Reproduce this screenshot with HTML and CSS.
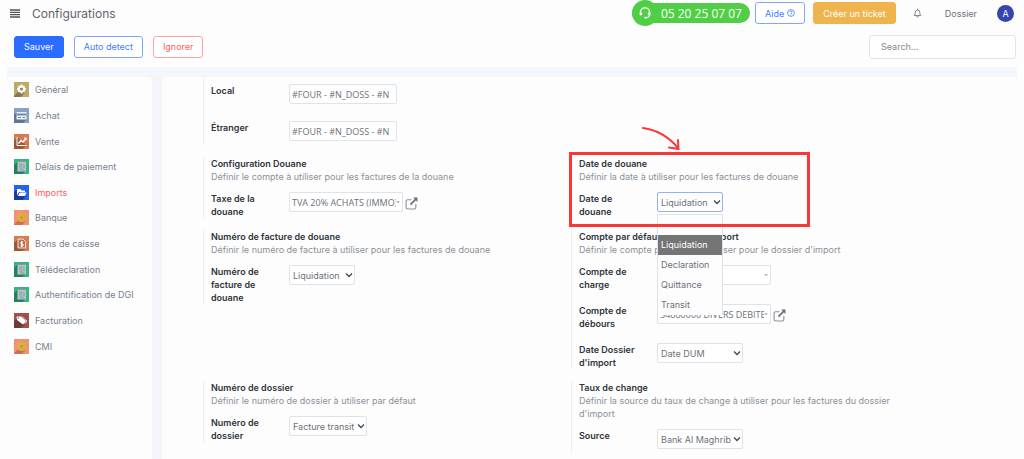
FILE: index.html
```html
<!DOCTYPE html>
<html lang="fr">

<head>
  <meta charset="utf-8">
  <title>Configurations</title>
  <meta name="viewport" content="width=device-width, initial-scale=1">
  <link rel="stylesheet" href="styles.css">
</head>

<body>

<!-- shared icons -->
<svg class="sprite" aria-hidden="true">
  <symbol id="chevron" viewBox="0 0 8 8"><path d="M1 2.5l3 3 3-3" fill="none" stroke="#444b52" stroke-width="1.4"/></symbol>
  <symbol id="caret" viewBox="0 0 8 8"><path d="M2 3.2h4L4 5.2z" fill="#a9adb2"/></symbol>
  <symbol id="external" viewBox="0 0 24 24">
    <path d="M12 5H5a3 3 0 0 0-3 3v11a3 3 0 0 0 3 3h12a3 3 0 0 0 3-3v-6" fill="none" stroke="#8b9097" stroke-width="2"/>
    <path d="M10 14L20 4" stroke="#6a6f76" stroke-width="3"/>
    <path d="M15 1h8v8z" fill="#6a6f76"/>
  </symbol>
  <symbol id="coin" viewBox="0 0 30 30">
    <rect width="30" height="30" fill="#f09274"/>
    <path d="M8 21L0 29v1h16l7-8z" fill="#c57258"/>
    <circle cx="15" cy="15" r="9" fill="#f2a73b"/>
    <path d="M15 6a9 9 0 0 1 0 18z" fill="#dcae35"/>
    <path d="M15 11l1.500 2.500 3 1.500-3 1.500-1.500 3-1.500-3-2.500-1.500 2.500-1.500z" fill="#6cc24a"/>
  </symbol>
  <symbol id="sheet" viewBox="0 0 30 30">
    <rect width="30" height="30" fill="#35b67f"/>
    <path d="M7 5L0 12v18h17l7-6z" fill="#26805c"/>
    <path d="M7 4h17v21H7z" fill="#b9c6ce"/>
    <path d="M7 4h17v2H7zM10 9h7v2h-7zM10 13h7v2h-7zM10 17h7v2h-7zM19 9h2v10h-2zM12 21h9v2h-9z" fill="#8797a0"/>
  </symbol>
</svg>

<header class="navbar">
  <button class="menu-toggle" type="button" aria-label="Menu">
    <svg viewBox="0 0 10 9"><path d="M0 1h10M0 3.3h10M0 5.7h10M0 8h10" stroke="#4c535a" stroke-width="1.3"/></svg>
  </button>
  <h1 class="page-title">Configurations</h1>

  <a class="phone" href="tel:0520250707">
    <span class="phone-icon">
      <svg viewBox="0 0 24 24" fill="none" stroke="#fff" stroke-width="2.2">
        <path d="M4 13v-2a8 8 0 0 1 16 0v3a6 6 0 0 1-6 6"/>
        <path d="M5 11v5M19 11v5" stroke-width="4"/>
        <path d="M11 20h3" stroke-width="3"/>
      </svg>
    </span>
    <span>05 20 25 07 07</span>
  </a>
  <a class="btn btn-outline help" href="#">Aide
    <svg viewBox="0 0 16 16" fill="none" stroke="#3f7bff" stroke-width="1.6">
      <circle cx="8" cy="8" r="6.8"/>
      <path d="M5.8 6.4a2.2 2.2 0 1 1 3.1 2c-.7.3-.9.6-.9 1.3M8 10.8v1.6"/>
    </svg>
  </a>
  <a class="btn btn-ticket" href="#">Créer un ticket</a>
  <button class="bell" type="button" aria-label="Notifications">
    <svg viewBox="0 0 16 18" fill="none" stroke="#6b7178" stroke-width="1.5">
      <path d="M8 1v2M2 13.5c1.6-1.4 1.8-3 1.8-5.500a4.200 4.200 0 0 1 8.400 0c0 2.500.2 4.100 1.800 5.500zM6.300 14.500c.3 2.200 3.100 2.200 3.400 0"/>
    </svg>
  </button>
  <a class="company" href="#">Dossier</a>
  <a class="avatar" href="#">A</a>
</header>

<div class="toolbar">
  <button class="btn btn-primary" type="button">Sauver</button>
  <button class="btn btn-outline" type="button">Auto detect</button>
  <button class="btn btn-danger" type="button">Ignorer</button>
  <input class="search" type="search" placeholder="Search..." aria-label="Search">
</div>

<main class="main">
  <nav class="sidebar">
    <a href="#">
      <svg viewBox="0 0 30 30">
        <rect width="30" height="30" fill="#bdaa68"/>
        <path d="M9 19L0 28v2h14l8-10z" fill="#85784c"/>
        <circle cx="15" cy="14" r="7" fill="#fff"/>
        <path d="M15 5v18M6 14h18M9 8l12 12M21 8L9 20" stroke="#fff" stroke-width="3.500"/>
        <circle cx="15" cy="14" r="3" fill="#8e8254"/>
      </svg>
      Général</a>
    <a href="#">
      <svg viewBox="0 0 30 30">
        <rect width="30" height="30" fill="#87a3bf"/>
        <path d="M6 8L0 14v16h18l7-7z" fill="#5c7894"/>
        <rect x="5" y="8" width="20" height="15" fill="#e8eff5"/>
        <path d="M5 11h20v4H5zM8 18h6v2H8zM17 18h5v2h-5z" fill="#6e8ca8"/>
      </svg>
      Achat</a>
    <a href="#">
      <svg viewBox="0 0 30 30">
        <rect width="30" height="30" fill="#d47b50"/>
        <path d="M6 7L0 13v17h17l8-7z" fill="#9c5738"/>
        <path d="M6 6v17h19" fill="none" stroke="#fff" stroke-width="2"/>
        <path d="M9 19l5-6 4 3 6-7" fill="none" stroke="#fff" stroke-width="3"/>
        <path d="M19 7h6v6z" fill="#fff"/>
      </svg>
      Vente</a>
    <a href="#"><svg><use href="#sheet"/></svg>Délais de paiement</a>
    <a class="active" href="#">
      <svg viewBox="0 0 30 30">
        <rect width="30" height="30" fill="#2463ee"/>
        <path d="M6 9L0 15v15h17l7-8z" fill="#163d99"/>
        <path d="M6 8h7l2 3h7v3H10l-4 7z" fill="#fff"/>
        <path d="M11 15h14l-3 7H8z" fill="#fff"/>
      </svg>
      Imports</a>
    <a href="#"><svg><use href="#coin"/></svg>Banque</a>
    <a href="#">
      <svg viewBox="0 0 30 30">
        <rect width="30" height="30" fill="#d67c50"/>
        <path d="M7 7L0 14v16h16l8-6z" fill="#9a5639"/>
        <path d="M8 6h10l5 5v13H8z" fill="#b5714f" stroke="#f5e6dd" stroke-width="2"/>
        <path d="M18 12h-4v4h4v4h-5M15.500 10v12" fill="none" stroke="#fff" stroke-width="2"/>
      </svg>
      Bons de caisse</a>
    <a href="#"><svg><use href="#sheet"/></svg>Télédeclaration</a>
    <a href="#"><svg><use href="#sheet"/></svg>Authentification de DGI</a>
    <a href="#">
      <svg viewBox="0 0 30 30">
        <rect width="30" height="30" fill="#9d504e"/>
        <path d="M5 12L0 17v13h14l9-8z" fill="#6f3837"/>
        <path d="M5 7h8l11 9-6 7L6 14z" fill="#fff"/>
        <path d="M15 7l11 9-5 6" fill="none" stroke="#fff" stroke-width="1.500"/>
        <circle cx="8.500" cy="10" r="1.500" fill="#9d504e"/>
      </svg>
      Facturation</a>
    <a href="#"><svg><use href="#coin"/></svg>CMI</a>
  </nav>

  <form class="panel">
    <section class="setting">
      <div class="field">
        <label for="local">Local</label>
        <input class="w-text" id="local" type="text" value="#FOUR - #N_DOSS - #N">
      </div>
      <div class="field">
        <label for="etranger">Étranger</label>
        <input class="w-text" id="etranger" type="text" value="#FOUR - #N_DOSS - #N">
      </div>
    </section>

    <section class="setting new-row">
      <h2>Configuration Douane</h2>
      <p>Définir le compte à utiliser pour les factures de la douane</p>
      <div class="field">
        <label for="taxe">Taxe de la douane</label>
        <span class="control w-record">
          <input id="taxe" type="text" value="TVA 20% ACHATS (IMMO)">
          <svg><use href="#caret"/></svg>
        </span>
        <a class="open-record" href="#" aria-label="Ouvrir"><svg><use href="#external"/></svg></a>
      </div>
    </section>

    <section class="setting highlighted">
      <h2>Date de douane</h2>
      <p>Définir la date à utiliser pour les factures de douane</p>
      <div class="field">
        <label for="date-douane">Date de douane</label>
        <span class="control w-small open">
          <select id="date-douane"><option>Liquidation</option><option>Declaration</option><option>Quittance</option><option>Transit</option></select>
          <svg><use href="#chevron"/></svg>
          <ul class="options">
            <li></li>
            <li class="selected">Liquidation</li>
            <li>Declaration</li>
            <li>Quittance</li>
            <li>Transit</li>
          </ul>
        </span>
      </div>
      <svg class="arrow" viewBox="0 0 38 24" fill="none" stroke="#fb3636" stroke-width="2" stroke-linecap="round">
        <path d="M1 1C15 3 27 10 36 21M36 13l.5 9-9.500-1.500"/>
      </svg>
    </section>

    <section class="setting">
      <h2>Numéro de facture de douane</h2>
      <p>Définir le numéro de facture à utiliser pour les factures de douane</p>
      <div class="field">
        <label for="num-facture">Numéro de facture de douane</label>
        <span class="control w-small">
          <select id="num-facture"><option>Liquidation</option></select>
          <svg><use href="#chevron"/></svg>
        </span>
      </div>
    </section>

    <section class="setting">
      <h2>Compte par défaut de dossier import</h2>
      <p>Définir le compte par défaut à utiliser pour le dossier d'import</p>
      <div class="field">
        <label for="charge">Compte de charge</label>
        <span class="control w-record">
          <input id="charge" type="text">
          <svg><use href="#caret"/></svg>
        </span>
      </div>
      <div class="field">
        <label for="debours">Compte de débours</label>
        <span class="control w-record">
          <input id="debours" type="text" value="34880000 DIVERS DEBITEURS">
          <svg><use href="#caret"/></svg>
        </span>
        <a class="open-record" href="#" aria-label="Ouvrir"><svg><use href="#external"/></svg></a>
      </div>
      <div class="field">
        <label for="date-dossier">Date Dossier d'import</label>
        <span class="control w-large">
          <select id="date-dossier"><option>Date DUM</option></select>
          <svg><use href="#chevron"/></svg>
        </span>
      </div>
    </section>

    <section class="setting">
      <h2>Numéro de dossier</h2>
      <p>Définir le numéro de dossier à utiliser par défaut</p>
      <div class="field">
        <label for="num-dossier">Numéro de dossier</label>
        <span class="control w-medium">
          <select id="num-dossier"><option>Facture transit</option></select>
          <svg><use href="#chevron"/></svg>
        </span>
      </div>
    </section>

    <section class="setting">
      <h2>Taux de change</h2>
      <p>Définir la source du taux de change à utiliser pour les factures du dossier d'import</p>
      <div class="field">
        <label for="source">Source</label>
        <span class="control w-large">
          <select id="source"><option>Bank Al Maghrib</option></select>
          <svg><use href="#chevron"/></svg>
        </span>
      </div>
    </section>
  </form>
</main>

</body>

</html>
```
FILE: styles.css
```css
*, *::before, *::after {
  box-sizing: border-box;
}

body {
  display: flex;
  flex-direction: column;
  height: 100vh;
  margin: 0;
  overflow: hidden;
  background: #fdfdfe;
  color: #6b7178;
  font-family: Inter, "Open Sans", sans-serif;
  font-size: 9px;
  line-height: 13px;
}

a {
  color: inherit;
  text-decoration: none;
}

button, input, select {
  font: inherit;
  color: inherit;
}

.sprite {
  position: absolute;
  width: 0;
  height: 0;
}

/* top bar */

.navbar {
  display: flex;
  align-items: center;
  height: 26px;
  padding: 0 10px;
}

.menu-toggle, .bell {
  display: flex;
  padding: 0;
  border: 0;
  background: none;
}

.menu-toggle svg {
  width: 10px;
  height: 9px;
}

.page-title {
  margin: 0 auto 0 12px;
  font-size: 12px;
  font-weight: 400;
  color: #5d646c;
}

.phone {
  display: flex;
  align-items: center;
  height: 20px;
  margin-right: 5px;
  padding-right: 8px;
  border-radius: 10px;
  background: #50cf46;
  color: #fff;
  font-family: "Open Sans", sans-serif;
  font-size: 12px;
}

.phone-icon {
  display: flex;
  align-items: center;
  justify-content: center;
  width: 26px;
  height: 26px;
  margin-right: 3px;
  border-radius: 50%;
  background: #50cf46;
}

.phone-icon svg {
  width: 14px;
  height: 14px;
}

.btn {
  display: flex;
  align-items: center;
  justify-content: center;
  height: 22px;
  padding: 0 9px;
  border: 1px solid;
  border-radius: 3px;
  background: #fff;
}

.btn-primary {
  border-color: #2a6cff;
  background: #2a6cff;
  color: #fff;
}

.btn-outline {
  border-color: #7ea6ff;
  color: #3f7bff;
}

.btn-danger {
  border-color: #ffa19c;
  color: #ff6059;
}

.btn-ticket {
  border-color: #f0b44f;
  background: #f0b44f;
  color: #fff;
}

.help {
  gap: 3px;
  margin-right: 8px;
}

.help svg {
  width: 8px;
  height: 8px;
}

.bell {
  margin: 0 23px 0 17px;
}

.bell svg {
  width: 9px;
  height: 10px;
}

.avatar {
  width: 17px;
  margin-left: 20px;
  border-radius: 50%;
  background: #3445ad;
  color: #fff;
  line-height: 17px;
  text-align: center;
}

/* action bar */

.toolbar {
  display: flex;
  align-items: center;
  gap: 10px;
  height: 41px;
  padding: 0 8px 0 14px;
}

.search {
  width: 147px;
  height: 24px;
  margin-left: auto;
  padding: 0 11px;
  border: 1px solid #e2e5ea;
  border-radius: 3px;
  background: #fff;
}

.search::placeholder {
  color: #85898e;
}

/* content */

.main {
  display: flex;
  flex: 1;
  gap: 10px;
  min-height: 0;
  margin: 0 7px;
  padding-top: 10px;
  background: linear-gradient(#f3f8fc 6px, #f4f4f9 10px);
}

.sidebar {
  display: grid;
  grid-auto-rows: 1fr;
  align-self: stretch;
  width: 145px;
  padding: 0 7px 100px;
  border-top-right-radius: 4px;
  background: #fdfdfe;
  color: #77818c;
}

.sidebar a {
  display: flex;
  align-items: center;
  gap: 6px;
}

.sidebar svg {
  width: 15px;
  height: 15px;
}

.sidebar .active {
  color: #ff6059;
}

.panel {
  display: grid;
  flex: 1;
  grid-template-columns: 1fr 1fr;
  align-content: start;
  align-items: start;
  row-gap: 12px;
  padding: 0 78px 0 41px;
  border-top-left-radius: 4px;
  background: #fdfdfe;
}

.setting {
  position: relative;
  padding: 0 24px 0 7px;
  border-left: 1px solid #eceef1;
}

.setting:first-child {
  padding-top: 7px;
}

.new-row {
  grid-column-start: 1;
}

.setting h2 {
  margin: 0;
  font-size: 9px;
  font-weight: 600;
  color: #30353b;
}

.setting p {
  margin: 0 0 9px;
  color: #8c9197;
}

.field {
  display: flex;
  align-items: flex-start;
  min-height: 24px;
}

.field + .field {
  margin-top: 13px;
}

.field label {
  width: 78px;
  padding-right: 12px;
  font-weight: 600;
  color: #30353b;
}

.field input, .field select {
  width: 100%;
  height: 20px;
  padding: 0 3px;
  border: 1px solid #dfe3e8;
  border-radius: 2px;
  background: #fff;
  appearance: none;
}

.field input {
  padding: 0 2px;
  font-family: "Open Sans", sans-serif;
}

.control {
  position: relative;
  display: grid;
  align-items: center;
}

.control input, .control select {
  grid-area: 1 / 1;
}

.control > svg {
  grid-area: 1 / 1;
  justify-self: end;
  width: 8px;
  height: 8px;
  margin-right: 2px;
  pointer-events: none;
}

.control.w-record > svg {
  margin-right: 1px;
}

.field .w-text {
  width: 108px;
}

.w-small {
  width: 66px;
}

.w-medium {
  width: 78px;
}

.w-large {
  width: 86px;
}

.w-record {
  width: 114px;
}

.field .w-record input {
  padding-right: 6px;
}

.open-record {
  margin: 5px 0 0 2px;
}

.open-record svg {
  display: block;
  width: 13px;
  height: 13px;
}

/* open drop-down, with the frame and arrow that point at it */

.open select {
  border-color: #8fb1ff;
}

.options {
  position: absolute;
  z-index: 1;
  top: 22px;
  left: 0;
  width: 66px;
  margin: 0;
  padding: 0;
  border: 1px solid #dfe3e8;
  border-bottom: 0;
  background: #fdfdfe;
  list-style: none;
}

.options li {
  height: 20px;
  padding-left: 3px;
  line-height: 20px;
}

.options .selected {
  background: #757575;
  color: #fff;
}

.highlighted::after {
  content: "";
  position: absolute;
  z-index: 2;
  top: -5px;
  left: -3px;
  width: 241px;
  height: 75px;
  border: 3px solid #fb3636;
}

.arrow {
  position: absolute;
  top: -30px;
  left: 70px;
  width: 38px;
  height: 24px;
}
```
